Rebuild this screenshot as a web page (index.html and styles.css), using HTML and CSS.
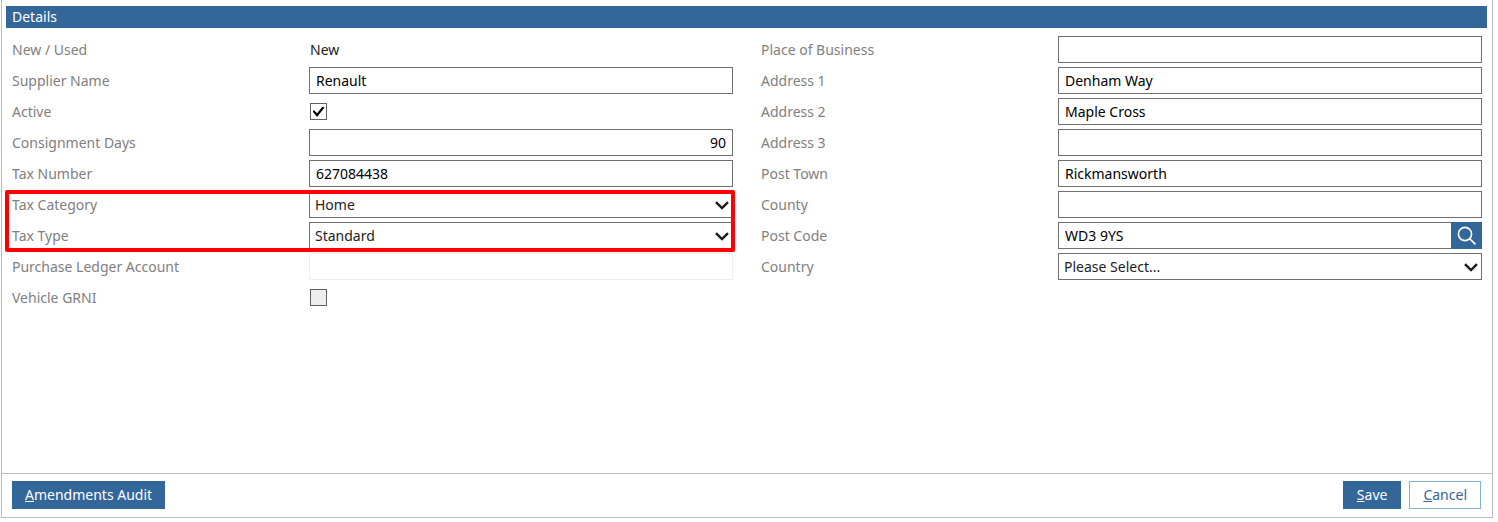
FILE: index.html
```html
<!DOCTYPE html>
<html lang="en">
  <head>
    <meta charset="UTF-8" />
    <meta name="viewport" content="width=device-width, initial-scale=1.0" />
    <title>Supplier Details</title>
    <link rel="stylesheet" href="styles.css">
  </head>
  <body>
    <form class="window">
      <main class="content">
        <h1 class="section-title">Details</h1>

        <div class="columns">
          <div class="column">
            <div class="row">
              <span class="label">New / Used</span>
              <span class="value">New</span>
            </div>
            <div class="row">
              <label for="supplier">Supplier Name</label>
              <input class="field" type="text" id="supplier" value="Renault" />
            </div>
            <div class="row">
              <label for="active">Active</label>
              <input class="check" type="checkbox" id="active" checked />
            </div>
            <div class="row">
              <label for="days">Consignment Days</label>
              <input class="field number" type="text" id="days" value="90" />
            </div>
            <div class="row">
              <label for="tax-number">Tax Number</label>
              <input class="field" type="text" id="tax-number" value="627084438" />
            </div>
            <div class="highlight">
              <div class="row">
                <label for="tax-category">Tax Category</label>
                <div class="select">
                  <select class="field" id="tax-category">
                    <option>Home</option>
                  </select>
                  <svg class="chevron" viewBox="0 0 14 9"><path d="M1 1.2 L7 7 L13 1.2" /></svg>
                </div>
              </div>
              <div class="row">
                <label for="tax-type">Tax Type</label>
                <div class="select">
                  <select class="field" id="tax-type">
                    <option>Standard</option>
                  </select>
                  <svg class="chevron" viewBox="0 0 14 9"><path d="M1 1.2 L7 7 L13 1.2" /></svg>
                </div>
              </div>
            </div>
            <div class="row">
              <label for="ledger">Purchase Ledger Account</label>
              <input class="field" type="text" id="ledger" disabled />
            </div>
            <div class="row">
              <label for="grni">Vehicle GRNI</label>
              <input class="check" type="checkbox" id="grni" disabled />
            </div>
          </div>

          <div class="column">
            <div class="row">
              <label for="place">Place of Business</label>
              <input class="field" type="text" id="place" />
            </div>
            <div class="row">
              <label for="address1">Address 1</label>
              <input class="field" type="text" id="address1" value="Denham Way" />
            </div>
            <div class="row">
              <label for="address2">Address 2</label>
              <input class="field" type="text" id="address2" value="Maple Cross" />
            </div>
            <div class="row">
              <label for="address3">Address 3</label>
              <input class="field" type="text" id="address3" />
            </div>
            <div class="row">
              <label for="town">Post Town</label>
              <input class="field" type="text" id="town" value="Rickmansworth" />
            </div>
            <div class="row">
              <label for="county">County</label>
              <input class="field" type="text" id="county" />
            </div>
            <div class="row">
              <label for="postcode">Post Code</label>
              <div class="lookup">
                <input class="field" type="text" id="postcode" value="WD3 9YS" />
                <button class="search" type="button" aria-label="Find address">
                  <svg viewBox="0 0 20 20">
                    <circle cx="8" cy="8" r="6.6" />
                    <path d="M12.8 12.8 L18.5 18.3" />
                  </svg>
                </button>
              </div>
            </div>
            <div class="row">
              <label for="country">Country</label>
              <div class="select">
                <select class="field" id="country">
                  <option>Please Select...</option>
                </select>
                <svg class="chevron" viewBox="0 0 14 9"><path d="M1 1.2 L7 7 L13 1.2" /></svg>
              </div>
            </div>
          </div>
        </div>
      </main>

      <footer class="actions">
        <button class="btn" type="button" accesskey="a"><u>A</u>mendments Audit</button>
        <div class="group">
          <button class="btn" type="button" accesskey="s"><u>S</u>ave</button>
          <button class="btn secondary" type="button" accesskey="c"><u>C</u>ancel</button>
        </div>
      </footer>
    </form>
  </body>
</html>
```
FILE: styles.css
```css
* {
  box-sizing: border-box;
}
body {
  margin: 0;
  background: #fff;
  color: #222;
}
body,
input,
select,
button {
  font-family: Tahoma, "Noto Sans", sans-serif;
  font-size: 14px;
  line-height: 20px;
}
.window {
  display: flex;
  flex-direction: column;
  min-height: calc(100vh - 4px);
  margin: 0 5px 4px 1px;
  border: 1px solid #bbb;
  border-top: none;
}
.content {
  flex: 1;
  padding: 6px 5px 6px 4px;
}
.section-title {
  margin: 0 0 8px;
  padding: 1px 6px;
  background: #336699;
  color: #fff;
  font-size: 14px;
  font-weight: normal;
  line-height: 20px;
}
.columns {
  display: grid;
  grid-template-columns: 1fr 1fr;
  gap: 28px;
  padding: 0 5px 0 6px;
}
.column,
.highlight {
  display: flex;
  flex-direction: column;
  gap: 4px;
}
.row {
  display: grid;
  grid-template-columns: 297px 1fr;
  align-items: center;
  height: 27px;
}
.label,
label {
  color: #808080;
}
.value {
  padding-left: 1px;
}
.field {
  display: block;
  width: 100%;
  height: 27px;
  margin: 0;
  padding: 0 6px;
  border: 1px solid #707070;
  border-radius: 0;
  background: #fff;
  color: #000;
  outline: none;
}
.field:disabled {
  border-color: #eee;
}
.number {
  text-align: right;
}
.check {
  display: grid;
  place-items: center;
  width: 17px;
  height: 17px;
  margin: 0 0 0 1px;
  appearance: none;
  border: 1px solid #606060;
  background: #fff;
}
.check:checked::after {
  content: "";
  width: 12px;
  height: 10px;
  background: #000;
  clip-path: polygon(0 48%, 12% 38%, 38% 68%, 84% 0, 100% 10%, 42% 100%, 34% 100%);
}
.check:disabled {
  background: #eee;
}

/* drop-downs */
.select {
  position: relative;
}
.select .field {
  padding: 0 24px 0 5px;
  appearance: none;
  color: #222;
}
.chevron {
  position: absolute;
  top: 10px;
  right: 4px;
  width: 14px;
  height: 9px;
  fill: none;
  stroke: #1a1a1a;
  stroke-width: 2.4;
  pointer-events: none;
}
.highlight {
  position: relative;
}
.highlight::after {
  content: "";
  position: absolute;
  inset: -1px -2px -3px -7px;
  border: 4px solid #fe0000;
  border-radius: 2px;
  pointer-events: none;
}

/* post code search */
.lookup {
  display: flex;
}
.lookup .field {
  flex: 1;
  min-width: 0;
  border-right: none;
}
.search {
  display: grid;
  place-items: center;
  width: 31px;
  height: 27px;
  padding: 0;
  border: none;
  background: #336699;
  cursor: pointer;
}
.search svg {
  width: 20px;
  height: 20px;
  fill: none;
  stroke: #fff;
  stroke-width: 1.6;
}

.actions {
  display: flex;
  justify-content: space-between;
  padding: 7px 11px 8px 10px;
  border-top: 1px solid #bbb;
}
.group {
  display: flex;
  gap: 8px;
}
.btn {
  height: 28px;
  padding: 0 12px;
  border: 1px solid #336699;
  background: #336699;
  color: #fff;
  cursor: pointer;
}
.group .btn {
  padding: 0 13px;
}
.btn.secondary {
  border-color: #82b1dc;
  background: #fff;
  color: #336699;
}
```
